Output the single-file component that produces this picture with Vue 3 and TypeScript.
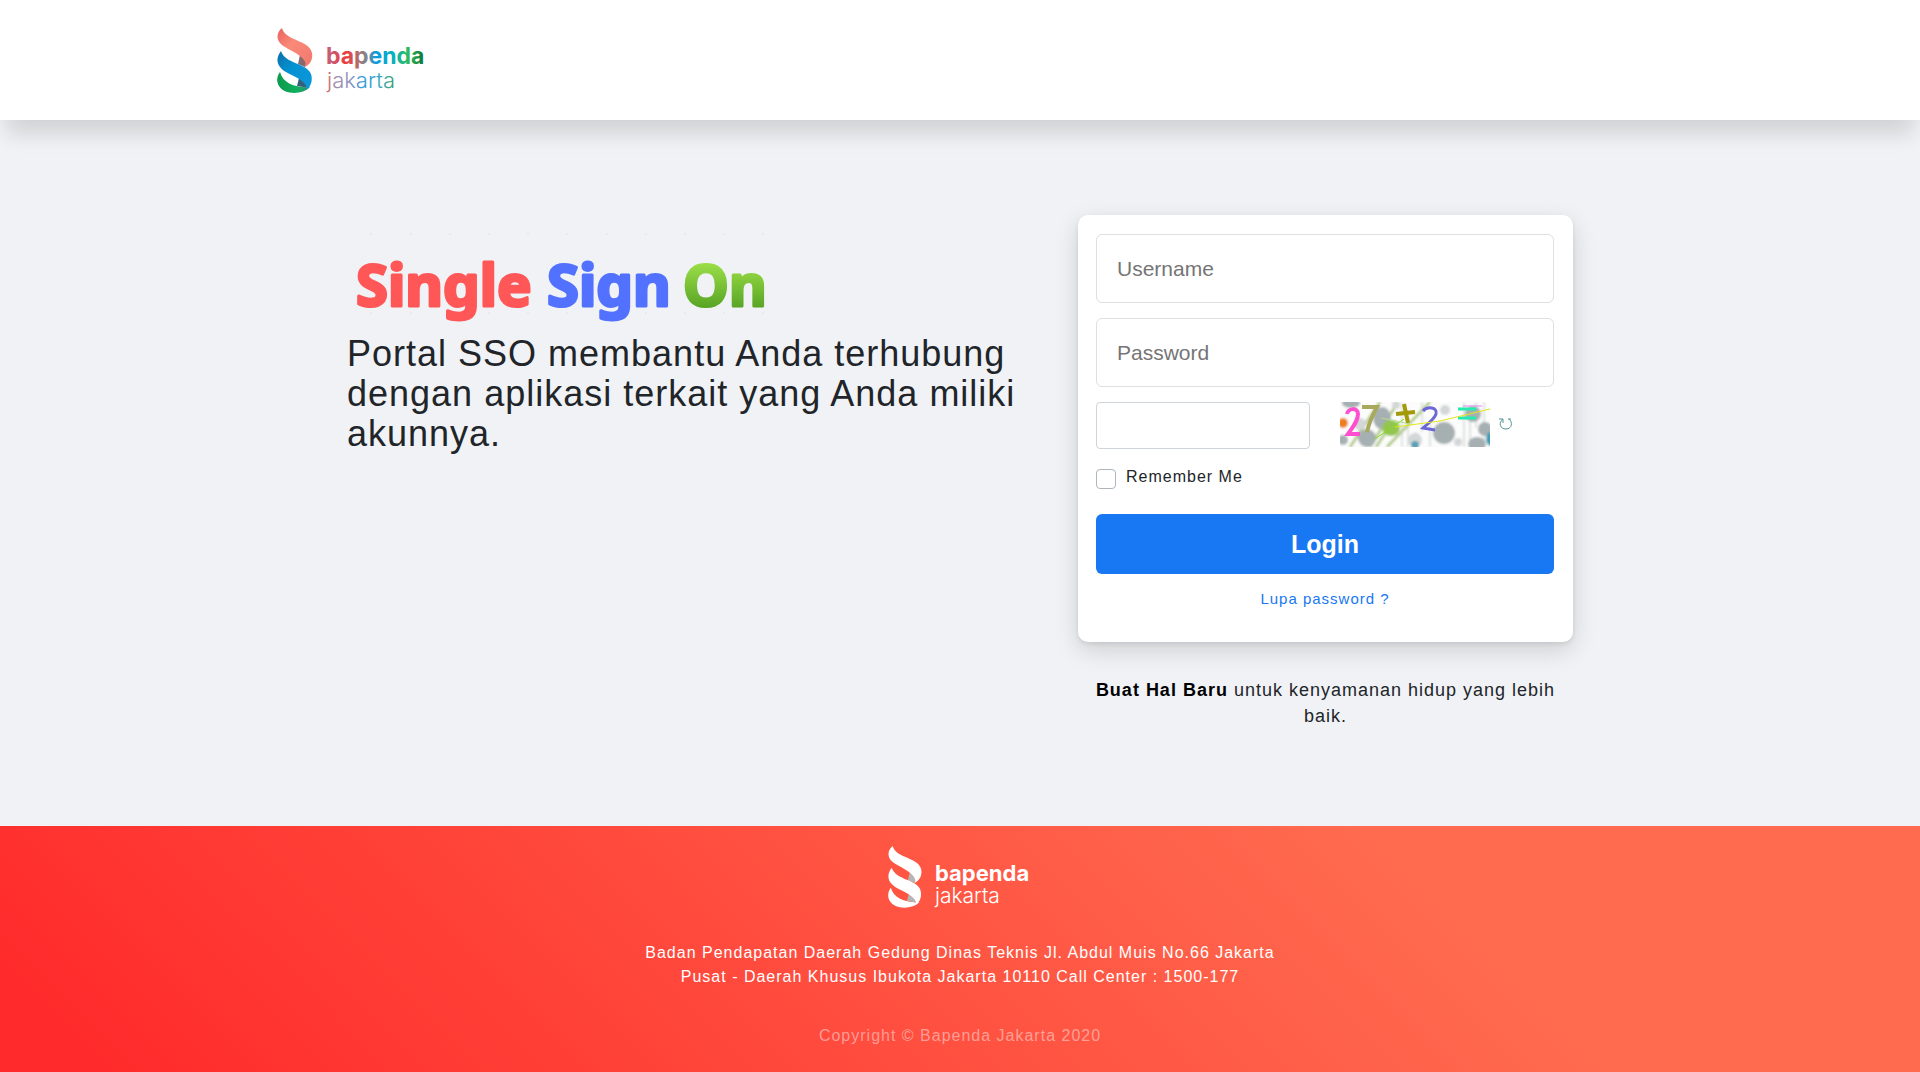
<script setup lang="ts">
import { ref } from 'vue'

const username = ref('')
const password = ref('')
const captcha = ref('')
const remember = ref(false)

const specks = [24, 64, 103, 142, 181, 220, 260, 299, 338, 377, 416]
</script>

<template>
  <div class="page">
    <header class="topbar">
      <div class="topbar-inner">
        <svg class="brand" width="152" height="68" viewBox="0 0 152 68" role="img" aria-label="bapenda jakarta">
          <defs>
            <linearGradient id="coral" x1="0" y1="0" x2="1" y2="1">
              <stop offset="0" stop-color="#e8625c" />
              <stop offset="0.4" stop-color="#fa8a7a" />
              <stop offset="1" stop-color="#f0776c" />
            </linearGradient>
            <linearGradient id="sky" x1="0" y1="0" x2="1" y2="1">
              <stop offset="0" stop-color="#0a6fa8" />
              <stop offset="0.4" stop-color="#0590d0" />
              <stop offset="1" stop-color="#0c9ade" />
            </linearGradient>
            <linearGradient id="leaf" x1="0" y1="0" x2="1" y2="0">
              <stop offset="0" stop-color="#0c9a4c" />
              <stop offset="0.6" stop-color="#10b060" />
              <stop offset="1" stop-color="#2b8d6e" />
            </linearGradient>
            <linearGradient id="boldText" gradientUnits="userSpaceOnUse" x1="50" y1="0" x2="149" y2="0">
              <stop offset="0" stop-color="#c2607c" />
              <stop offset="0.2" stop-color="#ee3a3c" />
              <stop offset="0.32" stop-color="#b0706c" />
              <stop offset="0.42" stop-color="#6f8b9c" />
              <stop offset="0.5" stop-color="#0b9be0" />
              <stop offset="0.66" stop-color="#08b0c0" />
              <stop offset="0.82" stop-color="#2fba5c" />
              <stop offset="1" stop-color="#0c6b2c" />
            </linearGradient>
            <linearGradient id="lightText" gradientUnits="userSpaceOnUse" x1="48" y1="0" x2="119" y2="0">
              <stop offset="0" stop-color="#e4573f" />
              <stop offset="0.12" stop-color="#a58aa8" />
              <stop offset="0.35" stop-color="#8f8fc0" />
              <stop offset="0.55" stop-color="#2f9bd8" />
              <stop offset="0.8" stop-color="#3aa6bd" />
              <stop offset="1" stop-color="#3a9d63" />
            </linearGradient>
          </defs>
          <path d="M23 27L31 30L28 39L21 36Z" fill="#86696c" />
          <path d="M5 0C0 4 -1 10 3 15C8 21 21 24 27 32C29 35 29 37 28 39C34 36 36 30 35 25C33 12 8 13 5 0Z" fill="url(#coral)" />
          <path d="M3 44C0 48 -1 53 2 58C7 67 26 67 33 59C20 60 6 56 3 44Z" fill="url(#leaf)" />
          <path d="M22 50L30 53L32 60L20 58Z" fill="#34607a" />
          <path d="M4 23C0 28 -1 34 3 39C8 46 21 48 27 55C29 57 30 59 29 62C34 59 36 52 34 46C30 35 8 36 4 23Z" fill="url(#sky)" />
          <text x="49" y="36" class="brand-bold" fill="url(#boldText)">bapenda</text>
          <text x="50" y="60" class="brand-light" fill="url(#lightText)">jakarta</text>
        </svg>
      </div>
    </header>

    <main class="content">
      <section class="intro">
        <svg class="wordmark" width="440" height="119" viewBox="0 0 440 119" role="img" aria-label="Single Sign On">
          <defs>
            <linearGradient id="lime" gradientUnits="userSpaceOnUse" x1="0" y1="50" x2="0" y2="92">
              <stop offset="0" stop-color="#98dc46" />
              <stop offset="1" stop-color="#5aa526" />
            </linearGradient>
          </defs>
          <g fill="#e6e8ea">
            <circle v-for="x in specks" :key="x" :cx="x" cy="19" r="1" />
            <circle v-for="x in specks" :key="`b${x}`" :cx="x" cy="98" r="1" />
          </g>
          <text x="9" y="91" class="sso" fill="#ff5757" stroke="#ff5757">Single</text>
          <text x="200" y="91" class="sso" fill="#5271ff" stroke="#5271ff">Sign</text>
          <text x="336" y="91" class="sso" fill="url(#lime)" stroke="url(#lime)">On</text>
        </svg>
        <h2 class="headline">Portal SSO membantu Anda terhubung dengan aplikasi terkait yang Anda miliki akunnya.</h2>
      </section>

      <section class="access">
        <form class="card" @submit.prevent>
          <input v-model="username" class="field" type="text" placeholder="Username" aria-label="Username" />
          <input v-model="password" class="field" type="password" placeholder="Password" aria-label="Password" />
          <div class="captcha-row">
            <input v-model="captcha" class="captcha-input" type="text" aria-label="Captcha" />
            <svg class="captcha" width="150" height="45" viewBox="0 0 150 45" role="img" aria-label="27 + 2 =">
              <defs>
                <filter id="soft" x="0" y="0" width="1" height="1">
                  <feGaussianBlur stdDeviation="0.8" />
                </filter>
              </defs>
              <rect width="150" height="45" fill="#fbfcfb" />
              <g filter="url(#soft)">
                <rect width="150" height="45" fill="#fbfcfb" />
                <g stroke="#dfe2e2" stroke-width="2">
                  <path d="M62 0V45M68 12V45M82 0V30M90 20V45M124 0V45M130 8V45M136 0V26M144 0V45M76 30V45" />
                </g>
                <g stroke="#b4cb8c" stroke-width="3" fill="none">
                  <path d="M10 45L40 0M30 45L58 0M36 45L50 24M47 45L90 0" />
                </g>
                <g fill="#a6afb1">
                  <ellipse cx="11" cy="1" rx="9" ry="5" />
                  <ellipse cx="42" cy="16" rx="9" ry="11" />
                  <circle cx="27" cy="36" r="9" />
                  <circle cx="3" cy="38" r="5" />
                  <circle cx="104" cy="31" r="11" />
                  <circle cx="133" cy="12" r="8" />
                  <circle cx="145" cy="27" r="7" />
                  <ellipse cx="137" cy="42" rx="9" ry="7" />
                </g>
                <g fill="#d3d7d8">
                  <circle cx="20" cy="22" r="6" />
                  <circle cx="56" cy="3" r="4" />
                  <circle cx="75" cy="38" r="7" />
                  <circle cx="105" cy="8" r="5" />
                  <circle cx="118" cy="40" r="4" />
                </g>
                <circle cx="3" cy="21" r="5" fill="#ef7d1c" />
                <ellipse cx="51" cy="26" rx="9" ry="8" fill="#94c650" />
                <circle cx="75" cy="43" r="4" fill="#5aa0b8" />
                <ellipse cx="151" cy="37" rx="5" ry="7" fill="#3f9bb4" />
              </g>
              <g fill="none">
                <path d="M7 12C8 6 18 5 18 12C18 19 13 25 8 32H20" stroke="#ff4fcf" stroke-width="4" />
                <path d="M22 5H37C32 14 29 21 27 30" stroke="#a9a95e" stroke-width="4" />
                <path d="M56 12L75 10M64 2L68 21" stroke="#a39a08" stroke-width="4" />
                <path d="M83 9C87 4 98 5 96 12C94 18 88 21 83 26L95 28" stroke="#6d66d6" stroke-width="3" />
                <path d="M118 7H136M118 16H136" stroke="#26eab0" stroke-width="3" />
                <path d="M123 4H142" stroke="#dc8cf0" />
                <path d="M35 37L64 17" stroke="#80dd18" />
                <path d="M41 16L70 22" stroke="#b4dc90" />
                <path d="M55 25L100 19L150 7" stroke="#e5e616" />
              </g>
            </svg>
            <button class="refresh" type="button" aria-label="Refresh captcha">
              <svg width="14" height="14" viewBox="0 0 14 14" fill="none" stroke="#4f9795" aria-hidden="true">
                <path d="M4 2C-1 6 1 12 7 12C13 12 14 5 10 2M0 2H4V6M9 2H12" />
              </svg>
            </button>
          </div>
          <label class="remember">
            <input v-model="remember" type="checkbox" />
            <span>Remember Me</span>
          </label>
          <button class="login" type="submit">Login</button>
          <a class="forgot" href="#">Lupa password ?</a>
        </form>
        <p class="tagline"><a href="#">Buat Hal Baru</a> untuk kenyamanan hidup yang lebih baik.</p>
      </section>
    </main>

    <footer class="footer">
      <svg class="footer-brand" width="144" height="64" viewBox="0 0 144 64" role="img" aria-label="bapenda jakarta">
        <g transform="scale(0.95)" fill="#fff">
          <path d="M23 27L31 30L28 39L21 36Z" fill="#b8b4b4" />
          <path d="M5 0C0 4 -1 10 3 15C8 21 21 24 27 32C29 35 29 37 28 39C34 36 36 30 35 25C33 12 8 13 5 0Z" />
          <path d="M3 44C0 48 -1 53 2 58C7 67 26 67 33 59C20 60 6 56 3 44Z" />
          <path d="M22 50L30 53L32 60L20 58Z" fill="#b8b4b4" />
          <path d="M4 23C0 28 -1 34 3 39C8 46 21 48 27 55C29 57 30 59 29 62C34 59 36 52 34 46C30 35 8 36 4 23Z" />
        </g>
        <text x="47" y="35" class="brand-bold small" fill="#fff">bapenda</text>
        <text x="47" y="57" class="brand-light small" fill="#fff">jakarta</text>
      </svg>
      <p class="address">Badan Pendapatan Daerah Gedung Dinas Teknis Jl. Abdul Muis No.66 Jakarta Pusat - Daerah Khusus Ibukota Jakarta 10110 Call Center : 1500-177</p>
      <p class="copyright">Copyright © Bapenda Jakarta 2020</p>
    </footer>
  </div>
</template>

<style>
body {
  background: #f0f2f5;
}
</style>

<style scoped>
* {
  box-sizing: border-box;
}

.page {
  display: flex;
  flex-direction: column;
  min-height: 100vh;
  background: #f0f2f5;
  color: #212529;
  font-family: "Liberation Sans", Arial, sans-serif;
  font-size: 16px;
  line-height: 24px;
  letter-spacing: 1px;
}

.topbar {
  height: 120px;
  padding: 28px 24px 24px;
  background: #fff;
  box-shadow: 0 20px 20px -6px rgba(0, 0, 0, 0.13);
}

.topbar-inner {
  max-width: 1366px;
  margin: 0 auto;
}

.brand {
  display: block;
}

.brand-bold {
  font-family: Inter, sans-serif;
  font-size: 23px;
  font-weight: 700;
  letter-spacing: 0;
}

.brand-light {
  font-family: Inter, sans-serif;
  font-size: 22px;
  font-weight: 300;
  letter-spacing: 0;
}

.brand-bold.small {
  font-size: 22px;
}

.brand-light.small {
  font-size: 21px;
}

.content {
  display: flex;
  flex: 1;
  justify-content: space-between;
  gap: 24px;
  width: 100%;
  max-width: 1274px;
  margin: 0 auto;
  padding: 95px 24px;
}

.intro {
  flex: 0 1 680px;
}

.wordmark {
  display: block;
}

.sso {
  font-family: "Noto Sans", sans-serif;
  font-size: 58px;
  font-weight: 700;
  letter-spacing: 0;
  stroke-width: 3px;
  stroke-linejoin: round;
}

.headline {
  margin: 0;
  font-size: 36px;
  font-weight: 400;
  line-height: 40px;
}

.access {
  flex: 0 1 495px;
}

.card {
  display: flex;
  flex-direction: column;
  height: 427px;
  padding: 19px 19px 19px 18px;
  border-radius: 10px;
  background: #fff;
  box-shadow: 0 2px 4px rgba(0, 0, 0, 0.08), 0 8px 24px rgba(0, 0, 0, 0.15);
}

.field {
  width: 100%;
  height: 69px;
  margin-bottom: 15px;
  padding: 0 20px;
  border: 1px solid #dddfe2;
  border-radius: 6px;
  background: #fff;
  color: #212529;
  font-family: inherit;
  font-size: 21px;
}

.field::placeholder {
  color: #757575;
}

.captcha-row {
  display: flex;
  align-items: flex-start;
}

.captcha-input {
  flex: 0 1 214px;
  min-width: 0;
  height: 47px;
  margin-right: 30px;
  padding: 0 12px;
  border: 1px solid #ced4da;
  border-radius: 4px;
  font-family: inherit;
  font-size: 16px;
}

.captcha {
  flex: none;
}

.refresh {
  display: flex;
  margin: 15px 0 0 9px;
  padding: 0;
  border: 0;
  background: none;
  cursor: pointer;
}

.remember {
  display: flex;
  align-self: flex-start;
  gap: 10px;
  margin: 16px 0 25px;
}

.remember input {
  width: 20px;
  height: 20px;
  margin: 4px 0 0;
  border: 1px solid #adb5bd;
  border-radius: 4px;
  background: #fff;
  appearance: none;
}

.remember input:checked {
  background: #1877f2;
}

.login {
  height: 60px;
  border: 0;
  border-radius: 6px;
  background: #1877f2;
  color: #fff;
  font-family: inherit;
  font-size: 25px;
  font-weight: 700;
  cursor: pointer;
}

.forgot {
  align-self: center;
  margin-top: 13px;
  color: #1877f2;
  font-size: 15px;
  text-decoration: none;
}

.tagline {
  margin: 35px 16px 0;
  font-size: 18px;
  line-height: 26px;
  text-align: center;
}

.tagline a {
  color: #000;
  font-weight: 700;
  text-decoration: none;
}

.footer {
  display: flex;
  flex-direction: column;
  align-items: center;
  padding: 20px 24px 24px;
  background: linear-gradient(45deg, #ff2a2b 4%, #ff6b4f 74%);
  color: #fff;
  text-align: center;
}

.footer-brand {
  display: block;
}

.address {
  max-width: 660px;
  margin: 31px 0 0;
}

.copyright {
  margin: 35px 0 0;
  color: rgba(255, 255, 255, 0.45);
}
</style>
